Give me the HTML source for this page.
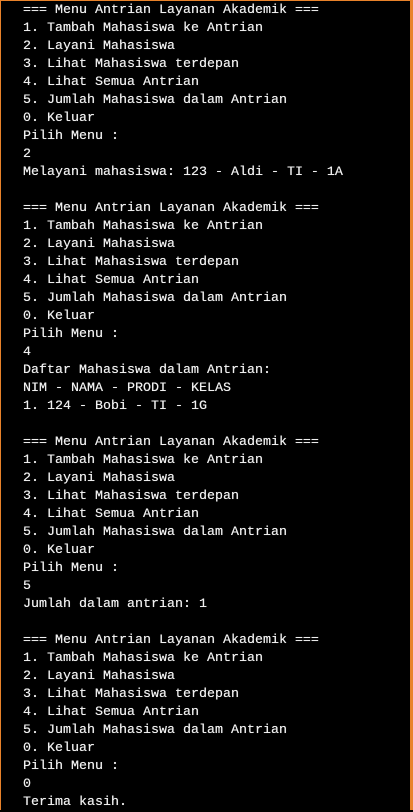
<!DOCTYPE html><html><head><style>
html,body{margin:0;padding:0;background:#000;}
body{width:413px;height:810px;overflow:hidden;position:relative;box-sizing:border-box;border-left:1px solid #e8822a;border-right:3px solid #e8822a;border-top:1px solid #e8822a;}
pre{margin:0;position:absolute;left:22px;top:1px;font-family:"Liberation Mono",monospace;font-size:13.33px;line-height:18px;color:#f0f0f0;text-shadow:0 0 0.4px #fff;}
</style></head><body><pre>=== Menu Antrian Layanan Akademik ===
1. Tambah Mahasiswa ke Antrian
2. Layani Mahasiswa
3. Lihat Mahasiswa terdepan
4. Lihat Semua Antrian
5. Jumlah Mahasiswa dalam Antrian
0. Keluar
Pilih Menu :
2
Melayani mahasiswa: 123 - Aldi - TI - 1A

=== Menu Antrian Layanan Akademik ===
1. Tambah Mahasiswa ke Antrian
2. Layani Mahasiswa
3. Lihat Mahasiswa terdepan
4. Lihat Semua Antrian
5. Jumlah Mahasiswa dalam Antrian
0. Keluar
Pilih Menu :
4
Daftar Mahasiswa dalam Antrian:
NIM - NAMA - PRODI - KELAS
1. 124 - Bobi - TI - 1G

=== Menu Antrian Layanan Akademik ===
1. Tambah Mahasiswa ke Antrian
2. Layani Mahasiswa
3. Lihat Mahasiswa terdepan
4. Lihat Semua Antrian
5. Jumlah Mahasiswa dalam Antrian
0. Keluar
Pilih Menu :
5
Jumlah dalam antrian: 1

=== Menu Antrian Layanan Akademik ===
1. Tambah Mahasiswa ke Antrian
2. Layani Mahasiswa
3. Lihat Mahasiswa terdepan
4. Lihat Semua Antrian
5. Jumlah Mahasiswa dalam Antrian
0. Keluar
Pilih Menu :
0
Terima kasih.</pre></body></html>
